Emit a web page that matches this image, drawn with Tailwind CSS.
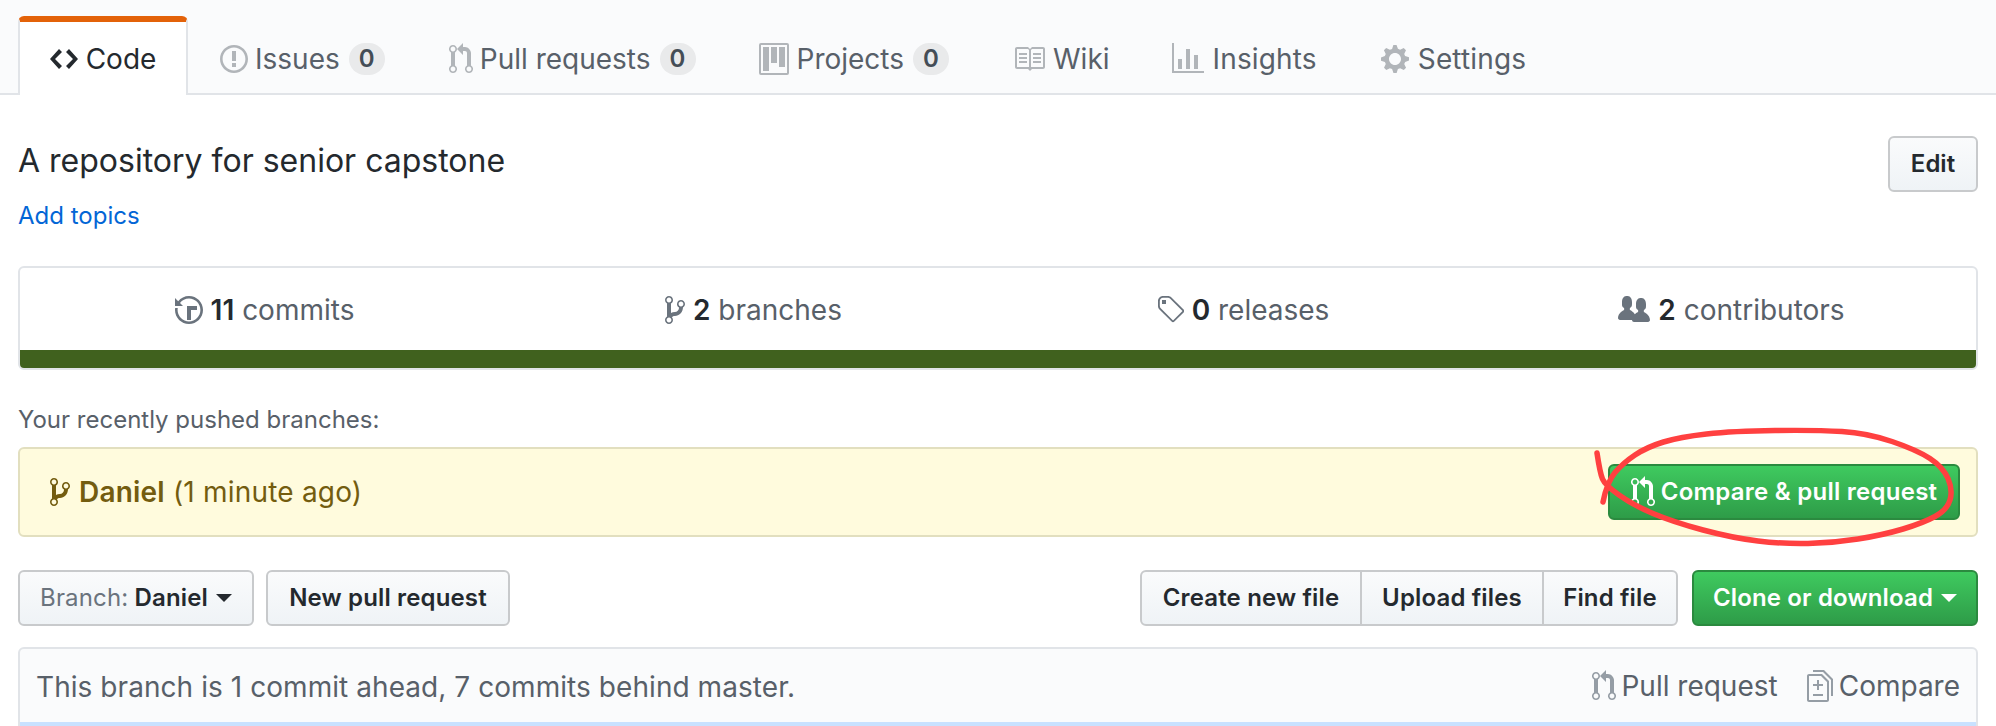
<!DOCTYPE html>
<html lang="en">
<head>
    <meta charset="UTF-8">
    <title>A repository for senior capstone</title>
    <script src="https://cdn.jsdelivr.net/npm/@tailwindcss/browser@4"></script>
</head>
<body class="relative w-[1996px] h-[726px] overflow-hidden bg-white font-['Inter',sans-serif] text-[28px] text-[#24292e]">
    <svg class="hidden">
        <symbol id="code" viewBox="0 0 14 16"><path d="M9.5 3L8 4.5 11.5 8 8 11.5 9.5 13 14 8 9.5 3zm-5 0L0 8l4.5 5L6 11.5 2.5 8 6 4.5 4.5 3z"/></symbol>
        <symbol id="issue" viewBox="0 0 14 16"><path d="M7 2.3c3.14 0 5.7 2.56 5.7 5.7s-2.56 5.7-5.7 5.7A5.71 5.71 0 0 1 1.3 8c0-3.14 2.56-5.7 5.7-5.7zM7 1C3.14 1 0 4.14 0 8s3.14 7 7 7 7-3.14 7-7-3.14-7-7-7zm1 3H6v5h2V4zm0 6H6v2h2v-2z"/></symbol>
        <symbol id="pr" viewBox="0 0 12 16"><path d="M11 11.28V5c-.03-.78-.34-1.47-.94-2.06C9.46 2.35 8.78 2.03 8 2H7V0L4 3l3 3V4h1c.27.02.48.11.69.31.21.2.3.42.31.69v6.28A1.993 1.993 0 0 0 10 15a1.993 1.993 0 0 0 1-3.72zm-1 2.92c-.66 0-1.2-.55-1.2-1.2 0-.65.55-1.2 1.2-1.2.65 0 1.2.55 1.2 1.2 0 .65-.55 1.2-1.2 1.2zM4 3c0-1.11-.89-2-2-2a1.993 1.993 0 0 0-1 3.72v6.56A1.993 1.993 0 0 0 2 15a1.993 1.993 0 0 0 1-3.72V4.72c.59-.34 1-.98 1-1.72zm-.8 10c0 .66-.55 1.2-1.2 1.2-.65 0-1.2-.55-1.2-1.2 0-.65.55-1.2 1.2-1.2.65 0 1.2.55 1.2 1.2zM2 4.2C1.34 4.2.8 3.65.8 3c0-.65.55-1.2 1.2-1.2.65 0 1.2.55 1.2 1.2 0 .65-.55 1.2-1.2 1.2z"/></symbol>
        <symbol id="project" viewBox="0 0 15 16"><path fill-rule="evenodd" d="M10 12h3V2h-3v10zm-4-2h3V2H6v8zm-4 4h3V2H2v12zm-1 1h13V1H1v14zM14 0H1a1 1 0 0 0-1 1v14a1 1 0 0 0 1 1h13a1 1 0 0 0 1-1V1a1 1 0 0 0-1-1z"/></symbol>
        <symbol id="book" viewBox="0 0 16 16"><path d="M3 5h4v1H3V5zm0 3h4V7H3v1zm0 2h4V9H3v1zm11-5h-4v1h4V5zm0 2h-4v1h4V7zm0 2h-4v1h4V9zm2-6v9c0 .55-.45 1-1 1H9.5l-1 1-1-1H2c-.55 0-1-.45-1-1V3c0-.55.45-1 1-1h5.5l1 1 1-1H15c.55 0 1 .45 1 1zm-8 .5L7.5 3H2v9h6V3.5zm7-.5H9.5l-.5.5V12h6V3z"/></symbol>
        <symbol id="graph" viewBox="0 0 16 16"><path d="M16 14v1H0V0h1v14h15zM5 13H3V8h2v5zm4 0H7V3h2v10zm4 0h-2V6h2v7z"/></symbol>
        <symbol id="gear" viewBox="0 0 14 16"><path d="M14 8.77v-1.6l-1.94-.64-.45-1.09.88-1.84-1.13-1.13-1.81.91-1.09-.45-.69-1.92h-1.6l-.63 1.94-1.11.45-1.84-.88-1.13 1.13.91 1.81-.45 1.09L0 7.23v1.59l1.94.64.45 1.09-.88 1.84 1.13 1.13 1.81-.91 1.09.45.69 1.92h1.59l.63-1.94 1.11-.45 1.84.88 1.13-1.13-.92-1.81.47-1.09L14 8.75v.02zM7 11c-1.66 0-3-1.34-3-3s1.34-3 3-3 3 1.34 3 3-1.34 3-3 3z"/></symbol>
        <symbol id="history" viewBox="0 0 14 16"><path d="M8 13H6V6h5v2H8v5zM7 1C4.81 1 2.87 2.02 1.59 3.59L0 2v4h4L2.5 4.5C3.55 3.17 5.17 2.3 7 2.3c3.14 0 5.7 2.56 5.7 5.7s-2.56 5.7-5.7 5.7A5.71 5.71 0 0 1 1.3 8c0-.34.03-.67.09-1H.08C.03 7.33 0 7.66 0 8c0 3.86 3.14 7 7 7s7-3.14 7-7-3.14-7-7-7z"/></symbol>
        <symbol id="branch" viewBox="0 0 10 16"><path d="M10 5c0-1.11-.89-2-2-2a1.993 1.993 0 0 0-1 3.72v.3c-.02.52-.23.98-.63 1.38-.4.4-.86.61-1.38.63-.83.02-1.48.16-2 .45V4.72a1.993 1.993 0 0 0-1-3.72C.88 1 0 1.89 0 3a2 2 0 0 0 1 1.72v6.56c-.59.35-1 .99-1 1.72 0 1.11.89 2 2 2 1.11 0 2-.89 2-2 0-.53-.2-1-.53-1.36.09-.06.48-.41.59-.47.25-.11.56-.17.94-.17 1.05-.05 1.95-.45 2.75-1.25S8.95 7.77 9 6.73h-.02C9.59 6.37 10 5.73 10 5zM2 1.8c.66 0 1.2.55 1.2 1.2 0 .65-.55 1.2-1.2 1.2C1.35 4.2.8 3.65.8 3c0-.65.55-1.2 1.2-1.2zm0 12.41c-.66 0-1.2-.55-1.2-1.2 0-.65.55-1.2 1.2-1.2.65 0 1.2.55 1.2 1.2 0 .65-.55 1.2-1.2 1.2zm6-8c-.66 0-1.2-.55-1.2-1.2 0-.65.55-1.2 1.2-1.2.65 0 1.2.55 1.2 1.2 0 .65-.55 1.2-1.2 1.2z"/></symbol>
        <symbol id="tag" viewBox="0 0 14 16"><path d="M7.73 1.73C7.26 1.26 6.62 1 5.96 1H3.5C2.13 1 1 2.13 1 3.5v2.47c0 .66.27 1.3.73 1.77l6.06 6.06c.39.39 1.02.39 1.41 0l4.59-4.59a.996.996 0 0 0 0-1.41L7.73 1.73zM2.38 7.09c-.31-.3-.47-.7-.47-1.13V3.5c0-.88.72-1.59 1.59-1.59h2.47c.42 0 .83.16 1.13.47l6.14 6.13-4.73 4.73-6.13-6.15zM3.01 3h2v2H3V3h.01z"/></symbol>
        <symbol id="people" viewBox="0 0 16 16"><path d="M16 12.999c0 .439-.45 1-1 1H7.995c-.539 0-.994-.447-.995-.999H1c-.54 0-1-.561-1-1 0-2.634 3-4 3-4s.229-.409 0-1c-.841-.621-1.058-.59-1-3 .058-2.419 1.367-3 2.5-3s2.442.58 2.5 3c.058 2.41-.159 2.379-1 3-.229.59 0 1 0 1s1.549.711 2.42 2.088C9.196 9.369 10 8.999 10 8.999s.229-.409 0-1c-.841-.62-1.058-.59-1-3 .058-2.419 1.367-3 2.5-3s2.437.581 2.495 3c.059 2.41-.158 2.38-1 3-.229.59 0 1 0 1s3.005 1.366 3.005 4z"/></symbol>
        <symbol id="diff" viewBox="0 0 13 16"><path d="M6 7h2v1H6v2H5V8H3V7h2V5h1v2zm-3 6h5v-1H3v1zM7.5 2L11 5.5V15c0 .55-.45 1-1 1H1c-.55 0-1-.45-1-1V3c0-.55.45-1 1-1h6.5zM10 6L7 3H1v12h9V6zM8.5 0H3v1h5l4 4v8h1V4.5L8.5 0z"/></symbol>
    </svg>

    <!-- repo tabs -->
    <nav class="flex h-[95px] pt-[16px] pl-[18px] bg-[#fafbfc] border-b-2 border-[#e1e4e8] text-[#586069]">
        <a class="flex items-center justify-center gap-[8px] w-[170px] h-[79px] bg-white text-[#24292e] border-x-2 border-x-[#e1e4e8] border-t-[6px] border-t-[#e36209] rounded-t-md">
            <svg class="w-[28px] h-[32px] fill-[#24292e]"><use href="#code"/></svg>Code
        </a>
        <a class="flex items-center gap-[7px] h-[79px] pl-[32px] pr-[32px] border-t-[6px] border-transparent">
            <svg class="w-[28px] h-[32px] fill-[#b1b5b9]"><use href="#issue"/></svg>Issues
            <span class="ml-[2px] flex items-center justify-center w-[36px] h-[32px] rounded-full bg-[#e9eaeb] text-[24px] font-semibold text-[#444d56]">0</span>
        </a>
        <a class="flex items-center gap-[7px] h-[79px] pl-[32px] pr-[32px] border-t-[6px] border-transparent">
            <svg class="w-[24px] h-[32px] fill-[#b1b5b9]"><use href="#pr"/></svg>Pull requests
            <span class="ml-[2px] flex items-center justify-center w-[36px] h-[32px] rounded-full bg-[#e9eaeb] text-[24px] font-semibold text-[#444d56]">0</span>
        </a>
        <a class="flex items-center gap-[8px] h-[79px] pl-[31px] pr-[32px] border-t-[6px] border-transparent">
            <svg class="w-[30px] h-[32px] fill-[#b1b5b9]"><use href="#project"/></svg>Projects
            <span class="ml-[1px] flex items-center justify-center w-[36px] h-[32px] rounded-full bg-[#e9eaeb] text-[24px] font-semibold text-[#444d56]">0</span>
        </a>
        <a class="flex items-center gap-[8px] h-[79px] pl-[32px] pr-[32px] border-t-[6px] border-transparent">
            <svg class="w-[32px] h-[32px] fill-[#b1b5b9]"><use href="#book"/></svg>Wiki
        </a>
        <a class="flex items-center gap-[9px] h-[79px] pl-[30px] pr-[32px] border-t-[6px] border-transparent">
            <svg class="w-[32px] h-[32px] fill-[#b1b5b9]"><use href="#graph"/></svg><span class="tracking-[0.15px]">Insights</span>
        </a>
        <a class="flex items-center gap-[9px] h-[79px] pl-[32px] pr-[32px] border-t-[6px] border-transparent">
            <svg class="w-[28px] h-[32px] fill-[#b1b5b9]"><use href="#gear"/></svg><span class="tracking-[0.15px]">Settings</span>
        </a>
    </nav>

    <main class="pl-[18px] pr-[18px]">
        <!-- description -->
        <div class="flex justify-between pt-[41px]">
            <div>
                <h1 class="text-[32px] leading-[48px] pt-[1px]">A repository for senior capstone</h1>
                <a class="block mt-[15px] text-[#0366d6] text-[24px] leading-[32px]">Add topics</a>
            </div>
            <button class="w-[90px] h-[56px] rounded-md border-2 border-[#c8cacc] bg-gradient-to-b from-[#fafbfc] to-[#eff3f6] text-[24px] font-semibold">Edit</button>
        </div>

        <!-- stats -->
        <div class="mt-[34px] h-[104px] border-2 border-[#e1e4e8] rounded-md overflow-hidden flex flex-col">
            <div class="grid grid-cols-4 h-[82px] pt-[1px] text-[#586069]">
                <div class="flex items-center justify-center gap-[8px]"><svg class="w-[28px] h-[32px] fill-[#6a737d]"><use href="#history"/></svg><span><b class="font-semibold text-[#24292e]">11</b> commits</span></div>
                <div class="flex items-center justify-center gap-[8px]"><svg class="w-[20px] h-[32px] fill-[#6a737d]"><use href="#branch"/></svg><span><b class="font-semibold text-[#24292e]">2</b> branches</span></div>
                <div class="flex items-center justify-center gap-[8px]"><svg class="w-[28px] h-[32px] fill-[#6a737d]"><use href="#tag"/></svg><span><b class="font-semibold text-[#24292e]">0</b> releases</span></div>
                <div class="flex items-center justify-center gap-[8px]"><svg class="w-[32px] h-[32px] fill-[#6a737d]"><use href="#people"/></svg><span><b class="font-semibold text-[#24292e]">2</b> contributors</span></div>
            </div>
            <div class="h-[18px] bg-[#40611e]"></div>
        </div>

        <!-- recently pushed -->
        <p class="mt-[35px] text-[24px] leading-[30px] text-[#586069]">Your recently pushed branches:</p>
        <div class="mt-[12px] h-[90px] flex items-center justify-between pl-[30px] pr-[16px] bg-[#fffbdd] border-2 border-[#e2dfbf] rounded-md text-[#735c0f]">
            <div class="flex items-center gap-[9px]"><svg class="w-[20px] h-[32px] fill-[#735c0f]"><use href="#branch"/></svg><span class="tracking-[0.2px]"><b class="font-semibold">Daniel</b> (1 minute ago)</span></div>
            <button class="flex items-center justify-center gap-[6px] w-[352px] h-[56px] rounded-md border-2 border-[#2b8a3f] bg-gradient-to-b from-[#3fca5f] to-[#2e9c48] text-white text-[24px] font-semibold tracking-[0.25px]"><svg class="w-[24px] h-[32px] fill-white"><use href="#pr"/></svg>Compare &amp; pull request</button>
        </div>

        <!-- file actions -->
        <div class="mt-[33px] flex justify-between text-[24px] font-semibold tracking-[0.15px]">
            <div class="flex gap-[12px]">
                <button class="flex items-center justify-center gap-[8px] w-[236px] h-[56px] rounded-md border-2 border-[#c8cacc] bg-gradient-to-b from-[#fafbfc] to-[#eff3f6]"><span><span class="font-normal text-[#6a737d]">Branch:</span> Daniel</span><span class="border-x-[8px] border-x-transparent border-t-[8px] border-t-[#24292e]"></span></button>
                <button class="w-[244px] h-[56px] rounded-md border-2 border-[#c8cacc] bg-gradient-to-b from-[#fafbfc] to-[#eff3f6]">New pull request</button>
            </div>
            <div class="flex gap-[14px]">
                <div class="flex h-[56px] rounded-md border-2 border-[#c8cacc] bg-gradient-to-b from-[#fafbfc] to-[#eff3f6]">
                    <button class="w-[220px] border-r-2 border-[#c8cacc]">Create new file</button>
                    <button class="w-[182px] border-r-2 border-[#c8cacc]">Upload files</button>
                    <button class="w-[132px]">Find file</button>
                </div>
                <button class="flex items-center justify-center gap-[8px] w-[286px] h-[56px] rounded-md border-2 border-[#2b8a3f] bg-gradient-to-b from-[#3fca5f] to-[#2e9c48] text-white">Clone or download<span class="border-x-[8px] border-x-transparent border-t-[8px] border-t-white"></span></button>
            </div>
        </div>

        <!-- branch status -->
        <div class="mt-[21px] h-[90px] flex justify-between pl-[16px] pr-[16px] pt-[17px] bg-[#fafbfc] border-2 border-[#e1e4e8] rounded-t-md text-[#586069]">
            <span class="tracking-[0.06px]">This branch is 1 commit ahead, 7 commits behind master.</span>
            <div class="flex gap-[29px] h-[40px]">
                <a class="flex items-center gap-[5px]"><svg class="w-[24px] h-[32px] fill-[#959da5]"><use href="#pr"/></svg>Pull request</a>
                <a class="flex items-center gap-[6px]"><svg class="w-[26px] h-[32px] fill-[#959da5]"><use href="#diff"/></svg>Compare</a>
            </div>
        </div>
    </main>
    <div class="absolute left-[20px] right-[20px] top-[722px] h-[4px] bg-[#c8e1ff]"></div>

    <!-- red marker scribble -->
    <svg class="absolute left-0 top-0 w-[1996px] h-[726px] pointer-events-none" viewBox="0 0 1996 726" fill="none">
        <path d="M1597 453 Q1600 473 1602.5 479 Q1605 485 1619 495 Q1633 505 1653 513.5 Q1673 522 1703 530 Q1733 538 1758 541 Q1783 544 1808 543.5 Q1833 543 1858 539 Q1883 535 1903 529 Q1923 523 1935 516.5 Q1947 510 1950 500 Q1953 490 1948 478.5 Q1943 467 1930 458.5 Q1917 450 1892 441.5 Q1867 433 1842 431.5 Q1817 430 1775 430.5 Q1733 431 1706.5 434 Q1680 437 1663.5 442 Q1647 447 1635 455 Q1623 463 1615 472.5 Q1607 482 1603 502" stroke="#ff4040" stroke-width="5.5" stroke-linecap="round"/>
    </svg>
</body>
</html>
